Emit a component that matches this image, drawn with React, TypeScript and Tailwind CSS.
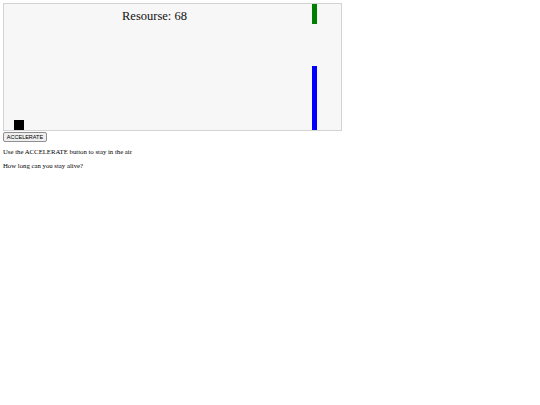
export default function App() {
  return (
    <div className="min-h-[405px] w-[540px] bg-white pl-[3px] pt-[3px] font-['Liberation_Serif',serif] text-black">
      {/* game area */}
      <div className="relative h-[128px] w-[339px] border border-[#d3d3d3] bg-[#f7f7f7]">
        <div className="absolute left-[118px] top-[5px] text-[12.5px] leading-[15px] text-[#111]">
          Resourse: 68
        </div>
        <div className="absolute left-[308px] top-0 h-[20px] w-[5px] bg-[#008000]" />
        <div className="absolute bottom-0 left-[308px] h-[64px] w-[5px] bg-[#0000ff]" />
        <div className="absolute bottom-0 left-[10px] h-[10px] w-[10px] bg-black" />
      </div>
      <button className="mt-[1px] block h-[10px] w-[44px] rounded-[2px] border border-[#8f8f8f] bg-[#efefef] p-0 text-center font-['Liberation_Sans',sans-serif] text-[5.5px] leading-[8px] text-black">
        ACCELERATE
      </button>
      <p className="mt-[5px] text-[6.75px] leading-[9px]">Use the ACCELERATE button to stay in the air</p>
      <p className="mt-[5px] text-[6.75px] leading-[9px]">How long can you stay alive?</p>
    </div>
  );
}
